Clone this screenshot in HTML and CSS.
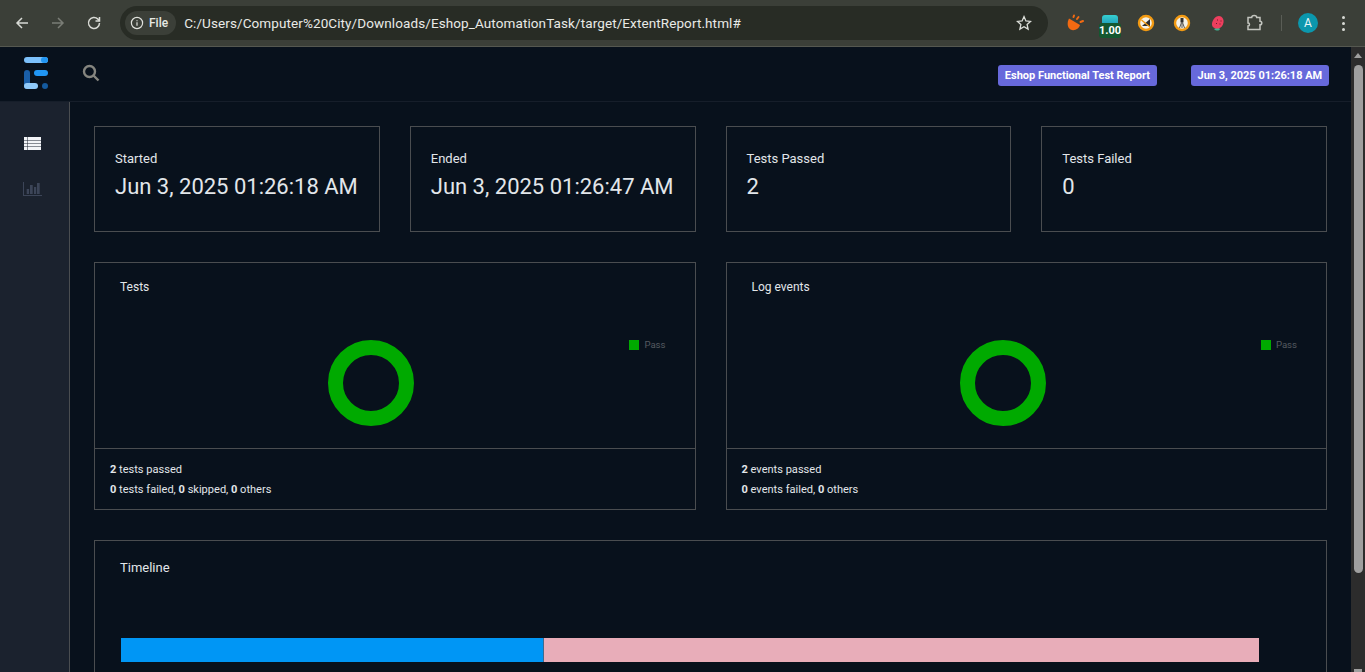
FILE: index.html
```html
<!DOCTYPE html>
<html lang="en">
<head>
    <meta charset="UTF-8" />
    <title>ExtentReport</title>
    <link rel="stylesheet" href="styles.css">
</head>
<body>
    <div class="chrome-bar">
        <div class="nav-icons">
            <svg class="nav-icon" viewBox="0 0 16 16"><path d="M14 8H3M8 3 3 8l5 5" /></svg>
            <svg class="nav-icon dim" viewBox="0 0 16 16"><path d="M2 8h11M8 3l5 5-5 5" /></svg>
            <svg class="nav-icon" viewBox="0 0 16 16"><path d="M13.5 8a5.5 5.5 0 1 1-1.6-3.9L13.5 6" /><path d="M13.5 2v4h-4" /></svg>
        </div>
        <div class="omnibox">
            <div class="file-chip">
                <svg class="info-icon" viewBox="0 0 14 14"><circle cx="7" cy="7" r="5.6" /><path d="M7 6.2v3.6M7 4.2v1" /></svg>
                <span>File</span>
            </div>
            <span class="url">C:/Users/Computer%20City/Downloads/Eshop_AutomationTask/target/ExtentReport.html#</span>
            <svg class="star" viewBox="0 0 16 16"><path d="M8 1.6 9.9 5.9l4.6.5-3.4 3.1 1 4.6L8 11.7l-4.1 2.4 1-4.6L1.5 6.4l4.6-.5z" /></svg>
        </div>
        <div class="extensions">
            <svg class="ext" viewBox="0 0 20 20">
                <path d="M4 5.5 15 12c-1 4-6 6.500-9.500 4.500C2 14.500 2 9 4 5.500z" fill="#f26a12" />
                <path d="M8.500 4 9 2.500M12 6l1.500-2M15.500 9 18 8" stroke="#f26a12" stroke-width="2" stroke-linecap="round" />
            </svg>
            <div class="ext-badge">
                <span class="badge-top"></span>
                <span class="badge-num">1.00</span>
            </div>
            <svg class="ext" viewBox="0 0 20 20">
                <circle cx="10" cy="10" r="7" fill="#f4f1e8" stroke="#f29a12" stroke-width="2.4" />
                <path d="M6 13 14 6v7z" fill="#2e2e2e" />
                <path d="M5.5 7 14 14" stroke="#f29a12" stroke-width="1.4" />
            </svg>
            <svg class="ext" viewBox="0 0 20 20">
                <circle cx="10" cy="10" r="7" fill="#f4f1e8" stroke="#f29a12" stroke-width="2.4" />
                <path d="M8.5 5h3v4.500h-3z" fill="#2e2e2e" />
                <path d="M10 9v6M9.500 9.500 7.500 15M10.500 9.500l2 5.500" stroke="#555" stroke-width="1" fill="none" />
            </svg>
            <svg class="ext" viewBox="0 0 20 20">
                <path d="M6 16c2 2 5 2 6 0l-2-2z" fill="#3fb28f" />
                <path d="M11 3c3 0 5 3 4.500 6.500-.5 3-2.500 5.500-5 6-2.500.5-6-.5-6.500-3.500C3.500 8 7 3 11 3z" fill="#ee3f5e" />
                <path d="M9 7h1M12.500 8h1M8 10.500h1M11.500 11h1" stroke="#6d1a2a" stroke-width="1.2" />
            </svg>
            <svg class="puzzle" viewBox="0 0 20 20"><path d="M4 4.500h3.700a2.500 2 0 0 1 5 0H16v3.700a1.800 1.800 0 0 1 0 3.600v4.700H4v-3.500a1.500 1.500 0 0 0 0-3z" /></svg>
            <span class="divider"></span>
            <span class="avatar">A</span>
            <span class="dots"><i></i><i></i><i></i></span>
        </div>
    </div>

    <div class="page">
        <div class="report">
            <header class="topbar">
                <div class="logo">
                    <svg viewBox="0 0 24 32" width="24" height="32">
                        <rect x="0" y="0" width="24" height="6" rx="3" fill="#7cc0fa" />
                        <rect x="17" y="0" width="7" height="6" rx="3" fill="#2196f3" />
                        <rect x="10" y="13" width="14" height="6" rx="3" fill="#2196f3" />
                        <rect x="0" y="13" width="6" height="19" rx="3" fill="#1a5fa8" />
                        <rect x="0" y="26" width="14" height="6" rx="3" fill="#90caf9" />
                        <circle cx="21" cy="29" r="3" fill="#145a9e" />
                    </svg>
                </div>
                <svg class="search" viewBox="0 0 18 18"><circle cx="7.5" cy="7.5" r="5.5" /><path d="M11.500 11.500 16.500 16.500" /></svg>
                <div class="badges">
                    <span class="badge">Eshop Functional Test Report</span>
                    <span class="badge">Jun 3, 2025 01:26:18 AM</span>
                </div>
            </header>

            <div class="body-row">
                <nav class="sidebar">
                    <svg class="side-icon list-icon" viewBox="0 0 17 13" fill="#f2f4f7">
                        <path d="M0 0h3.500v3H0zM4 0h13v3H4zM0 3.500h3.500V6H0zM4 3.500h13V6H4zM0 6.500h3.500V9H0zM4 6.500h13V9H4zM0 9.500h3.500V13H0zM4 9.500h13V13H4z" />
                    </svg>
                    <svg class="side-icon bars-icon" viewBox="0 0 19 14" fill="#3c4558">
                        <path d="M0 0h1v13h19v1H0zM3.700 7h2.400v5H3.700zM7 3h2.700v9H7zM11 5h2.200v7H11zM14 1h2.700v11H14z" />
                    </svg>
                </nav>

                <main class="content">
                    <section class="stat-row">
                        <div class="card stat"><p class="stat-label">Started</p><h3 class="stat-value">Jun 3, 2025 01:26:18 AM</h3></div>
                        <div class="card stat"><p class="stat-label">Ended</p><h3 class="stat-value">Jun 3, 2025 01:26:47 AM</h3></div>
                        <div class="card stat"><p class="stat-label">Tests Passed</p><h3 class="stat-value">2</h3></div>
                        <div class="card stat"><p class="stat-label">Tests Failed</p><h3 class="stat-value">0</h3></div>
                    </section>

                    <section class="chart-row">
                        <div class="card chart-card">
                            <div class="chart-head">Tests</div>
                            <div class="chart-area">
                                <div class="donut"></div>
                                <div class="legend"><span class="legend-box"></span>Pass</div>
                            </div>
                            <div class="chart-foot">
                                <div><b>2</b> tests passed</div>
                                <div><b>0</b> tests failed, <b>0</b> skipped, <b>0</b> others</div>
                            </div>
                        </div>
                        <div class="card chart-card">
                            <div class="chart-head">Log events</div>
                            <div class="chart-area">
                                <div class="donut"></div>
                                <div class="legend"><span class="legend-box"></span>Pass</div>
                            </div>
                            <div class="chart-foot">
                                <div><b>2</b> events passed</div>
                                <div><b>0</b> events failed, <b>0</b> others</div>
                            </div>
                        </div>
                    </section>

                    <section class="card timeline">
                        <div class="timeline-title">Timeline</div>
                        <div class="timeline-bar">
                            <span class="seg-blue"></span>
                            <span class="seg-pink"></span>
                        </div>
                    </section>
                </main>
            </div>
        </div>

        <div class="scrollbar">
            <span class="arrow-up"></span>
            <span class="thumb"></span>
            <span class="arrow-down"></span>
        </div>
    </div>
</body>
</html>
```

FILE: styles.css
```css
html, body {
    height: 100%;
}

body {
    margin: 0;
    overflow: hidden;
    font-family: Roboto, "Liberation Sans", sans-serif;
    background-color: #08111c;
    color: #e2e6ea;
    display: flex;
    flex-direction: column;
}

/* browser toolbar */
.chrome-bar {
    height: 46px;
    flex: none;
    display: flex;
    align-items: center;
    background-color: #3b3f38;
    border-bottom: 1px solid #555850;
}

.nav-icons {
    display: flex;
    gap: 20px;
    padding-left: 14px;
    width: 106px;
    flex: none;
    box-sizing: border-box;
    margin-right: 14px;
}

.nav-icon {
    width: 16px;
    height: 16px;
    fill: none;
    stroke: #d8dad5;
    stroke-width: 1.5;
}

.nav-icon.dim {
    stroke: #7a7d76;
}

.omnibox {
    width: 928px;
    height: 34px;
    flex: none;
    display: flex;
    align-items: center;
    background-color: #282c25;
    border-radius: 17px;
    box-sizing: border-box;
    padding-left: 5px;
}

.file-chip {
    height: 24px;
    display: flex;
    align-items: center;
    gap: 5px;
    padding: 0 8px 0 5px;
    background-color: #3b3f38;
    border-radius: 12px;
    font-size: 12px;
    font-weight: 500;
    color: #e6e8e3;
}

.info-icon {
    width: 14px;
    height: 14px;
    fill: none;
    stroke: #e0e2dd;
    stroke-width: 1.2;
}

.url {
    margin-left: 8px;
    font-size: 13.5px;
    letter-spacing: 0.1px;
    color: #e8eae6;
    white-space: nowrap;
}

.star {
    width: 16px;
    height: 16px;
    margin-left: auto;
    margin-right: 16px;
    fill: none;
    stroke: #dcded9;
    stroke-width: 1.3;
}

.extensions {
    display: flex;
    align-items: center;
    flex: 1;
    padding-left: 17px;
}

.ext {
    width: 20px;
    height: 20px;
    flex: none;
    margin-right: 16px;
}

.ext-badge {
    width: 22px;
    height: 23px;
    margin: 7px 15px 0 -2px;
    position: relative;
    flex: none;
}

.badge-top {
    position: absolute;
    left: 3px;
    top: 0;
    width: 16px;
    height: 12px;
    border-radius: 3px;
    background: linear-gradient(#35d0d0, #1e8fb5);
}

.badge-num {
    position: absolute;
    left: 0;
    bottom: 0;
    width: 22px;
    height: 15px;
    border-radius: 3px;
    background-color: #14572f;
    color: #fff;
    font-size: 11px;
    font-weight: 700;
    line-height: 15px;
    text-align: center;
}

.puzzle {
    width: 20px;
    height: 20px;
    flex: none;
    fill: none;
    stroke: #c3c5bf;
    stroke-width: 1.5;
}

.divider {
    width: 1px;
    height: 16px;
    margin: 0 16px 0 17px;
    background-color: #5a5d56;
    flex: none;
}

.avatar {
    width: 20px;
    height: 20px;
    flex: none;
    border-radius: 50%;
    background-color: #0b97ad;
    color: #e8f6f8;
    font-size: 12px;
    line-height: 20px;
    text-align: center;
}

.dots {
    display: flex;
    flex-direction: column;
    gap: 3px;
    margin-left: 24px;
}

.dots i {
    width: 3px;
    height: 3px;
    border-radius: 50%;
    background-color: #d8dad5;
}

/* report page */
.page {
    flex: 1;
    min-height: 0;
    display: flex;
}

.report {
    flex: 1;
    min-width: 0;
    display: flex;
    flex-direction: column;
}

.topbar {
    height: 55px;
    flex: none;
    display: flex;
    align-items: center;
    box-sizing: border-box;
    border-bottom: 1px solid #161e2a;
    padding-right: 22px;
}

.logo {
    width: 70px;
    flex: none;
    display: flex;
    justify-content: center;
    padding-left: 2px;
    box-sizing: border-box;
    margin-bottom: 2px;
}

.search {
    width: 18px;
    height: 18px;
    margin-left: 12px;
    margin-bottom: 3px;
    fill: none;
    stroke: #85857f;
    stroke-width: 2.4;
}

.badges {
    margin-left: auto;
    display: flex;
    gap: 34px;
    padding-top: 3px;
}

.badge {
    background-color: #6769db;
    color: #fff;
    font-size: 11px;
    font-weight: 700;
    line-height: 15px;
    padding: 3px 6.75px;
    border-radius: 3px;
}

.body-row {
    flex: 1;
    min-height: 0;
    display: flex;
}

.sidebar {
    width: 69px;
    flex: none;
    background-color: #1b222e;
    border-right: 1px solid #4a4d50;
    display: flex;
    flex-direction: column;
    align-items: flex-start;
    padding-top: 35px;
}

.side-icon {
    display: block;
}

.list-icon {
    width: 17px;
    height: 13px;
    margin-left: 24px;
}

.bars-icon {
    width: 19px;
    height: 14px;
    margin: 32px 0 0 23px;
}

.content {
    flex: 1;
    min-width: 0;
    padding: 24px 24px 0;
    overflow: hidden;
}

.card {
    border: 1px solid #4a4d50;
    box-sizing: border-box;
}

.stat-row {
    display: grid;
    grid-template-columns: repeat(4, 1fr);
    gap: 30px;
    height: 106px;
}

.stat {
    padding: 24px 20px;
}

.stat-label {
    margin: 0;
    font-size: 13px;
    line-height: 16px;
}

.stat-value {
    margin: 7px 0 0;
    font-size: 22px;
    font-weight: 400;
    line-height: 26px;
}

.chart-row {
    display: grid;
    grid-template-columns: repeat(2, 1fr);
    gap: 30px;
    margin-top: 30px;
    height: 248px;
}

.chart-card {
    display: flex;
    flex-direction: column;
}

.chart-head {
    padding: 16px 25px 0;
    font-size: 12px;
    line-height: 16px;
}

.chart-area {
    flex: 1;
    position: relative;
    display: flex;
    justify-content: center;
    align-items: flex-start;
    padding: 45px 47px 0 0;
}

.donut {
    width: 86px;
    height: 86px;
    border: 15px solid #00aa00;
    border-radius: 50%;
    box-sizing: border-box;
}

.legend {
    position: absolute;
    top: 44px;
    right: 29px;
    display: flex;
    align-items: center;
    gap: 5px;
    font-size: 9.6px;
    line-height: 12px;
    color: #555a60;
}

.legend-box {
    width: 10px;
    height: 10px;
    background-color: #00aa00;
}

.chart-foot {
    height: 61px;
    box-sizing: border-box;
    border-top: 1px solid #4a4d50;
    padding: 11px 15px 0;
    font-size: 11.06px;
    line-height: 20px;
}

.chart-foot b {
    font-weight: 700;
}

.timeline {
    margin-top: 30px;
    height: 200px;
    padding: 18px 25px 0;
}

.timeline-title {
    font-size: 13px;
    line-height: 17px;
}

.timeline-bar {
    display: flex;
    margin: 62px 0 0 1px;
    height: 24px;
    width: 1138px;
}

.seg-blue {
    width: 422px;
    background-color: #0096f5;
    border-right: 1px solid #3f6b8f;
}

.seg-pink {
    flex: 1;
    background-color: #e8adb9;
}

.scrollbar {
    width: 14px;
    flex: none;
    background-color: #2c2c2c;
    position: relative;
}

.thumb {
    position: absolute;
    left: 3px;
    top: 18px;
    width: 9px;
    height: 508px;
    background-color: #9f9f9f;
    border-radius: 5px;
}

.arrow-up {
    position: absolute;
    left: 3px;
    top: 6px;
    border-left: 4px solid transparent;
    border-right: 4px solid transparent;
    border-bottom: 5px solid #9f9f9f;
}

.arrow-down {
    position: absolute;
    left: 3px;
    bottom: 0;
    width: 8px;
    height: 3px;
    background-color: #9f9f9f;
}
```
